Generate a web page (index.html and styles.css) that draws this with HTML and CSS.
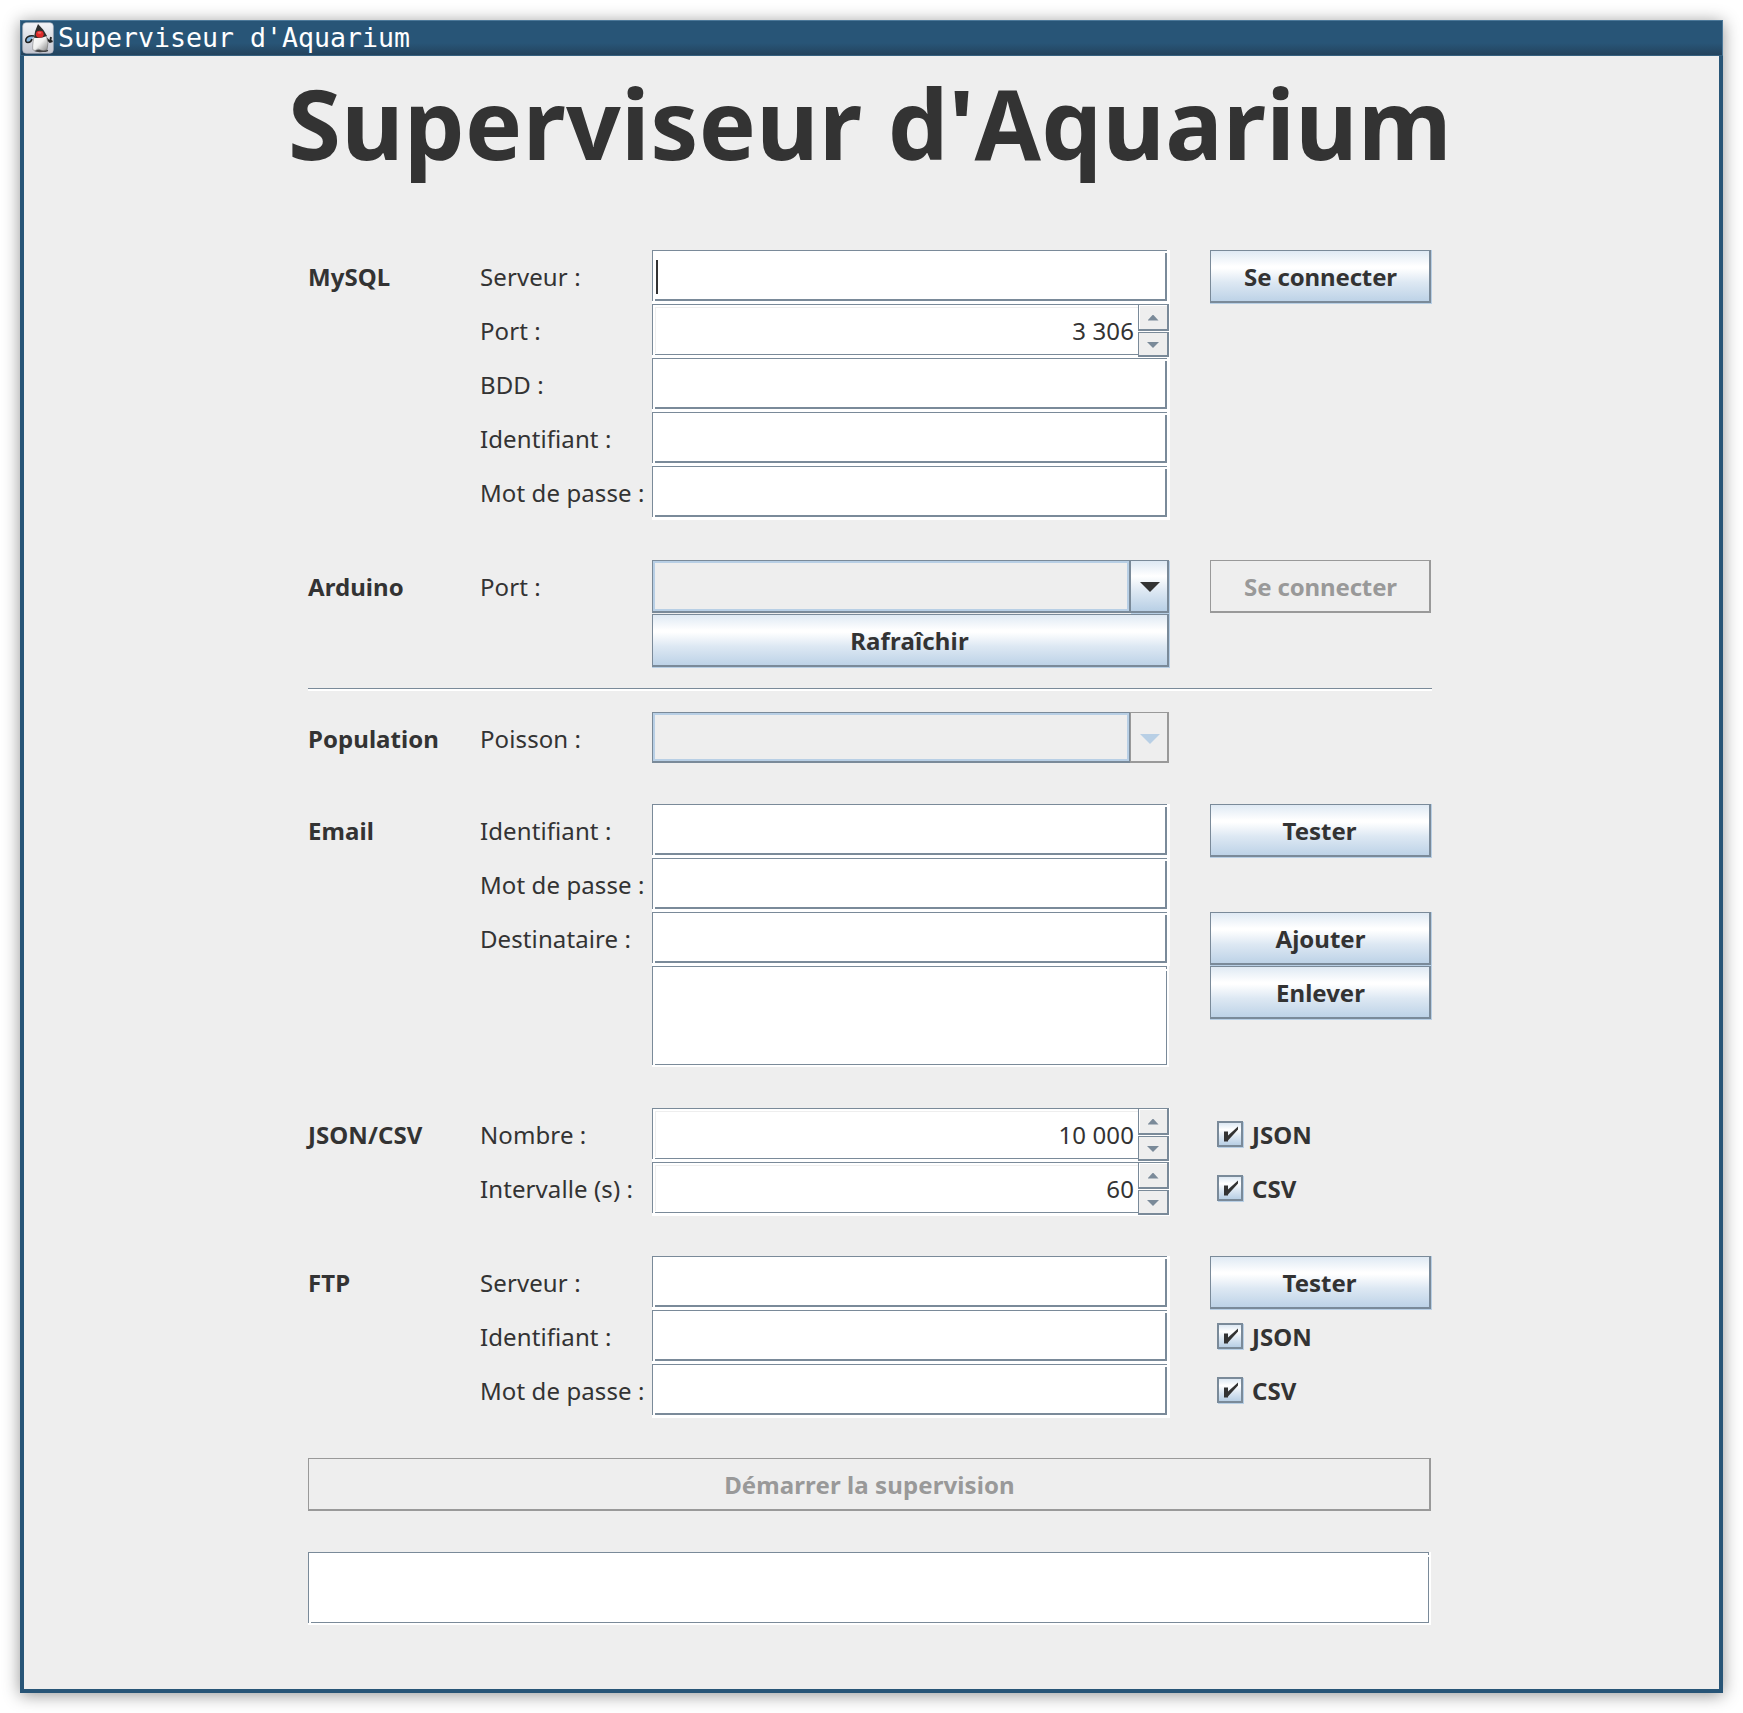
FILE: index.html
```html
<!DOCTYPE html>
<html lang="fr">
<head>
<meta charset="utf-8">
<title>Superviseur d'Aquarium</title>
<link rel="stylesheet" href="styles.css">
</head>
<body>
<div class="window">
  <header class="titlebar">
    <svg class="duke" viewBox="0 0 32 32">
      <defs><linearGradient id="tile" x1="0" y1="0" x2="0" y2="1"><stop offset="0" stop-color="#f4f4f8"/><stop offset="1" stop-color="#c4c6d0"/></linearGradient>
      <linearGradient id="belly" x1="0" y1="0" x2="1" y2="1"><stop offset="0" stop-color="#fff"/><stop offset=".5" stop-color="#f0f0f0"/><stop offset="1" stop-color="#888"/></linearGradient></defs>
      <rect x=".7" y=".7" width="30.6" height="30.6" rx="3.5" fill="url(#tile)" stroke="#b9bcc6" stroke-width=".6"/>
      <path d="M12 29Q17 26 26 28Q27 30 21 30Q14 30.500 12 29Z" fill="#444"/>
      <path d="M12 14Q6 13 4 17Q3 20.500 6 20.500Q9 20.500 10 17" fill="#86b4dc" stroke="#222" stroke-width="1.6"/>
      <path d="M24 16L28 20L30.500 19M28 20L29 15" fill="none" stroke="#222" stroke-width="1.9"/>
      <path d="M12 15Q10 25 11 28Q13 29.500 16 27Q21 30 25 28Q27.500 21 24 13Z" fill="url(#belly)" stroke="#555" stroke-width=".4"/>
      <path d="M16 2Q12.500 9 12 15.500Q18 17 25 14Q21.500 7 16 2Z" fill="#2d2d2d"/>
      <ellipse cx="17.800" cy="12.200" rx="3.900" ry="3.400" fill="#dd2a2a"/><ellipse cx="17.500" cy="10.800" rx="2" ry="1" fill="#f06060"/>
    </svg>
    <span>Superviseur d'Aquarium</span>
  </header>
  <main class="content">
    <h1>Superviseur d'Aquarium</h1>

    <section class="group">
      <b class="name">MySQL</b><label>Serveur :</label><div class="field"><i class="caret"></i></div><button class="btn connect">Se connecter</button>
      <label>Port :</label><div class="spinner"><span>3 306</span><div class="steps"><i class="up"></i><i class="down"></i></div></div>
      <label>BDD :</label><div class="field"></div>
      <label>Identifiant :</label><div class="field"></div>
      <label>Mot de passe :</label><div class="field"></div>
    </section>

    <section class="group">
      <b class="name">Arduino</b><label>Port :</label><div class="combo"><div class="value"></div><div class="arrow"><svg viewBox="0 0 20 10"><path d="M0 0H20L10 10Z"/></svg></div></div><button class="btn connect" disabled>Se connecter</button>
      <button class="btn refresh">Rafraîchir</button>
    </section>

    <hr>

    <section class="group population">
      <b class="name">Population</b><label>Poisson :</label><div class="combo disabled"><div class="value"></div><div class="arrow"><svg viewBox="0 0 20 10"><path d="M0 0H20L10 10Z"/></svg></div></div>
    </section>

    <section class="group">
      <b class="name">Email</b><label>Identifiant :</label><div class="field"></div><button class="btn">Tester</button>
      <label>Mot de passe :</label><div class="field"></div>
      <label>Destinataire :</label><div class="field"></div><button class="btn edit">Ajouter</button>
      <div class="list recipients"></div><button class="btn edit">Enlever</button>
    </section>

    <section class="group">
      <b class="name">JSON/CSV</b><label>Nombre :</label><div class="spinner"><span>10 000</span><div class="steps"><i class="up"></i><i class="down"></i></div></div>
      <div class="check"><svg viewBox="0 0 14 16"><path d="M0 5H4V9L14 0V3L4 14V15H0Z"/></svg><b>JSON</b></div>
      <label>Intervalle (s) :</label><div class="spinner"><span>60</span><div class="steps"><i class="up"></i><i class="down"></i></div></div>
      <div class="check"><svg viewBox="0 0 14 16"><path d="M0 5H4V9L14 0V3L4 14V15H0Z"/></svg><b>CSV</b></div>
    </section>

    <section class="group">
      <b class="name">FTP</b><label>Serveur :</label><div class="field"></div><button class="btn">Tester</button>
      <label>Identifiant :</label><div class="field"></div>
      <div class="check"><svg viewBox="0 0 14 16"><path d="M0 5H4V9L14 0V3L4 14V15H0Z"/></svg><b>JSON</b></div>
      <label>Mot de passe :</label><div class="field"></div>
      <div class="check"><svg viewBox="0 0 14 16"><path d="M0 5H4V9L14 0V3L4 14V15H0Z"/></svg><b>CSV</b></div>
    </section>

    <button class="btn start" disabled>Démarrer la supervision</button>
    <div class="list log"></div>
  </main>
</div>
</body>
</html>
```
FILE: styles.css
```css
* { box-sizing: border-box; }

body {
  margin: 0;
  padding: 20px;
  height: 1713px;
  background: #fff;
  color: #333;
  font: 24px/54px "Noto Sans", sans-serif;
  overflow: hidden;
}

.window {
  height: 1673px;
  background: #eee;
  border: solid #285577;
  border-width: 0 4px 4px;
  box-shadow: 0 2px 16px rgba(0, 0, 0, .42);
}

.titlebar {
  display: flex;
  align-items: center;
  gap: 3px;
  height: 36px;
  margin: 0 -4px;
  padding-left: 2px;
  border: 1px solid #4c7899;
  border-left-color: #3c6789;
  border-bottom-color: #35607f;
  background: linear-gradient(#285577 65%, #23435d);
  color: #fff;
  font: 26.58px/34px "DejaVu Sans Mono", monospace;
}
.duke { width: 32px; height: 32px; margin-left: -1px; }
.titlebar span { margin-left: 1px; }

.content {
  display: flex;
  flex-direction: column;
  gap: 40px;
  width: 1124px;
  margin-left: 284px;
}

h1 {
  margin: 0 -60px;
  height: 154px;
  font: bold 96px/133px "Noto Sans", sans-serif;
  font-kerning: none;
  letter-spacing: .35px;
  text-align: center;
  white-space: nowrap;
}

.group {
  display: grid;
  grid-template-columns: 172px 172px 518px 262px;
  grid-auto-rows: 54px;
}
.name { grid-column: 1; letter-spacing: .06px; }
.group label { grid-column: 2; white-space: nowrap; letter-spacing: .1px; }
.field, .spinner, .combo, .refresh, .recipients { grid-column: 3; }
.group > .btn:not(.refresh), .check { grid-column: 4; margin-left: 40px; width: 222px; }

.field {
  position: relative;
  background:
    linear-gradient(#7a8a99, #7a8a99) 0 0 / 515px 1px no-repeat,
    linear-gradient(#7a8a99, #7a8a99) 0 0 / 1px 51px no-repeat,
    linear-gradient(#7a8a99, #7a8a99) 3px 49px / 512px 2px no-repeat,
    linear-gradient(#7a8a99, #7a8a99) 513px 3px / 2px 48px no-repeat,
    #fff;
}
.caret { position: absolute; left: 4px; top: 10px; width: 2px; height: 34px; background: #333; }

.spinner {
  display: flex;
  justify-content: flex-end;
  background:
    linear-gradient(#7a8a99, #7a8a99) 0 0 / 515px 1px no-repeat,
    linear-gradient(#7a8a99, #7a8a99) 0 0 / 1px 51px no-repeat,
    linear-gradient(#7a8a99, #7a8a99) 3px 50px / 512px 1px no-repeat,
    linear-gradient(#eee, #eee) 3px 3px / 512px 1px no-repeat,
    linear-gradient(#eee, #eee) 3px 3px / 1px 46px no-repeat,
    #fff;
}
.spinner span { margin-right: 4px; letter-spacing: .1px; }
.steps { display: grid; grid-template-rows: 27px 25px; gap: 1px; width: 31px; height: 53px; margin-right: 1px; }
.steps i { display: grid; place-items: center; background: #eee; border: solid #7a8a99; border-width: 1px 2px 2px 1px; }
.steps i::after { content: ""; width: 12px; height: 6px; background: #7a8a99; clip-path: polygon(0 0, 100% 0, 50% 100%); }
.steps .up { box-shadow: inset 1px 1px #fff; }
.steps .up::after { width: 11px; height: 6px; margin-top: 1px; clip-path: polygon(50% 0, 100% 100%, 0 100%); }
.steps .down::after { margin-top: 2px; }

.btn {
  display: block;
  height: 54px;
  padding: 0 3px 0 0;
  border: 0;
  color: #333;
  font: bold 24px/54px "Noto Sans", sans-serif;
  background:
    linear-gradient(#7a8a99, #7a8a99) 0 0 / calc(100% - 1px) 1px no-repeat,
    linear-gradient(#7a8a99, #7a8a99) 0 0 / 1px calc(100% - 1px) no-repeat,
    linear-gradient(#dde8f3, #fff 30%, #fff 34%, #dde8f3 60%, #b8cfe5);
  box-shadow: inset -1px -1px #b8cfe5, inset -3px -3px #7a8a99;
}
.btn:disabled {
  color: #999;
  background:
    linear-gradient(#999, #999) 0 0 / calc(100% - 1px) 1px no-repeat,
    linear-gradient(#999, #999) 0 0 / 1px calc(100% - 1px) no-repeat,
    #eee;
  box-shadow: inset -1px -1px #eee, inset -3px -3px #999;
}
.connect { padding-right: 1px; letter-spacing: -.14px; }
.edit { padding-right: 1px; }
.refresh { letter-spacing: .15px; }
.start { width: 1124px; padding-right: 1px; letter-spacing: .1px; }

.combo { display: grid; grid-template-columns: 478px 39px; height: 53px; }
.value { border: solid #7a8a99; border-width: 1px 1px 2px; box-shadow: inset 0 0 0 2px #b8cfe5; }
.arrow {
  display: grid;
  place-items: center;
  border: solid #7a8a99;
  border-width: 1px 2px 2px 1px;
  background: linear-gradient(#dde8f3, #fff 30%, #dde8f3 60%, #b8cfe5);
  box-shadow: 1px 1px #b8cfe5;
}
.arrow svg { width: 20px; height: 10px; margin-top: 2px; margin-left: 2px; fill: #333; }
.combo.disabled { height: 51px; }
.disabled .arrow { border-color: #999; background: #eee; box-shadow: none; }
.disabled .arrow svg { margin-top: 4px; fill: #b8cfe5; }
.population { grid-auto-rows: 52px; height: 52px; line-height: 54px; }

hr { width: 100%; height: 3px; margin: -20px 0 -19px; border: solid #fff; border-width: 0 0 2px; background: #7a8a99; }

.list {
  background:
    linear-gradient(#7a8a99, #7a8a99) 0 0 / calc(100% - 2px) 1px no-repeat,
    linear-gradient(#7a8a99, #7a8a99) 0 0 / 1px calc(100% - 2px) no-repeat,
    linear-gradient(#7a8a99, #7a8a99) calc(100% - 2px) 0 / 1px 3px no-repeat,
    linear-gradient(#7a8a99, #7a8a99) 3px calc(100% - 2px) / calc(100% - 5px) 1px no-repeat,
    linear-gradient(#7a8a99, #7a8a99) calc(100% - 2px) 5px / 1px calc(100% - 7px) no-repeat,
    #fff;
}
.recipients { width: 517px; height: 101px; }
.group:has(.recipients) { grid-template-rows: 54px 54px 54px 102px; }
.log { width: 1123px; height: 73px; }

.check { display: flex; padding-left: 7px; gap: 9px; }
.check svg {
  flex: none;
  width: 26px;
  height: 26px;
  margin-top: 13px;
  padding: 3px 3px 2px 5px;
  border: 2px solid #7a8a99;
  background: linear-gradient(#dde8f3, #fff 30%, #dde8f3 60%, #b8cfe5);
  box-shadow: 1px 1px #b8cfe5;
  fill: #333;
}
```
